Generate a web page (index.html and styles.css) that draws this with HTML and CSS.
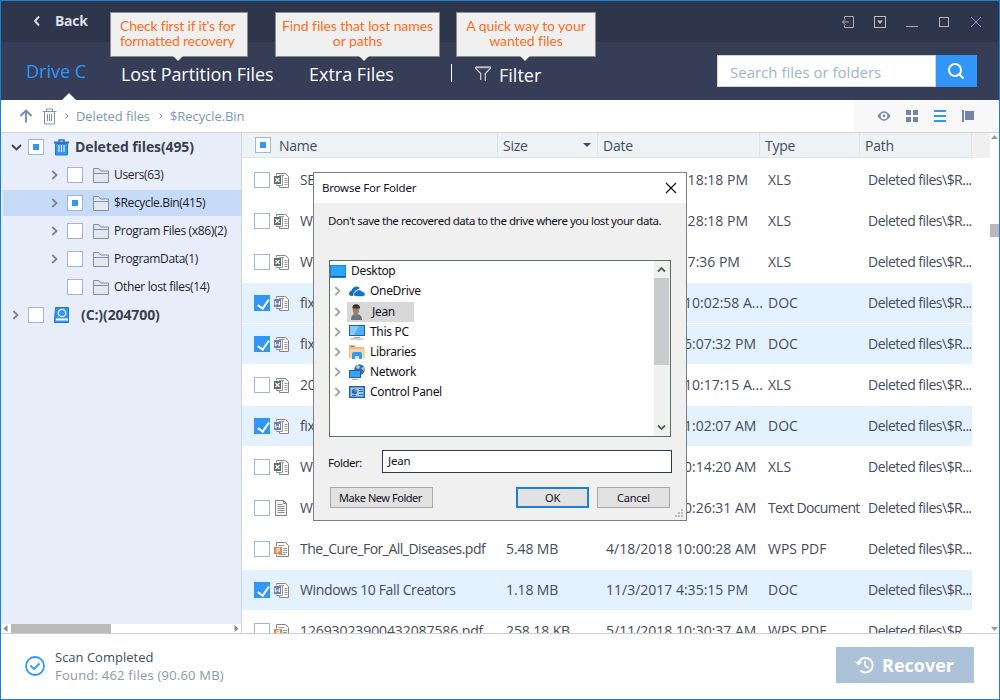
FILE: index.html
```html
<!DOCTYPE html>
<html lang="en">
<head>
    <meta charset="UTF-8">
    <title>Data Recovery</title>
    <link rel="stylesheet" href="styles.css">
</head>
<body>
    <!-- shared icons -->
    <svg width="0" height="0" class="sprite">
        <symbol id="i-folder" viewBox="0 0 16 15">
            <path d="M.5 14.500V.5H6l1.500 2.500h8v11.500z" fill="#e3e9ec" stroke="#7f8ea9"/>
            <path d="M.5 5.500h15" stroke="#7f8ea9"/>
        </symbol>
        <symbol id="i-page" viewBox="0 0 15 15">
            <path d="M2.500 2.500V.5h9l3 3v11h-9v-2h-3v-1" fill="#fff" stroke="#858585"/>
            <path d="M5 2.500h5M8.500 3v9.500H5M10.500 5.500h3M10.500 7.500h3M10.500 9.500h3M10.500 11.500h3" fill="none" stroke="#999"/>
        </symbol>
        <symbol id="i-xls" viewBox="0 0 15 15">
            <use href="#i-page"/>
            <rect x="0" y="3" width="7" height="8" fill="#5b6b5c"/>
            <path d="M1.500 5l4 4M5.500 5l-4 4" stroke="#fff" stroke-width="1.200"/>
        </symbol>
        <symbol id="i-doc" viewBox="0 0 15 15">
            <use href="#i-page"/>
            <rect x="0" y="3" width="7" height="8" fill="#6f81b0"/>
            <path d="M1.300 5v4L3.500 7l2 2V5" fill="none" stroke="#fff"/>
        </symbol>
        <symbol id="i-pdf" viewBox="0 0 15 15">
            <path d="M2.500 4.500v-4h9l3 3v11h-12v-2" fill="#fff" stroke="#858585"/>
            <path d="M4.500 3.500h6M9 6.500h4M9 8.500h4M9 10.500h4M5 12.500h7" stroke="#999"/>
            <rect x="0" y="5" width="8" height="7" fill="#dd8b4c"/>
            <path d="M3 11V6.500h2.500v2.200H3" fill="none" stroke="#fff"/>
        </symbol>
        <symbol id="i-txt" viewBox="0 0 15 16">
            <path d="M1.500.5h8l3 3v12h-11z" fill="#f4f4f4" stroke="#858585"/>
            <path d="M9.500.5v3h3" fill="none" stroke="#858585"/>
            <path d="M3.500 4.500h5M3.500 6.500h7M3.500 8.500h7M3.500 10.500h7M3.500 12.500h7" stroke="#8d8d8d"/>
        </symbol>
        <symbol id="i-chev" viewBox="0 0 7 10">
            <path d="M1.300 1l4.200 4-4.200 4" fill="none" stroke="currentColor" stroke-width="1.800"/>
        </symbol>
    </svg>

    <div class="window">
        <div class="titlebar">
            <svg class="back-icon" width="8" height="12" viewBox="0 0 8 12"><path d="M6 1.500L2 6l4 4.500" fill="none" stroke="#d5d8e0" stroke-width="2"/></svg>
            <span class="back">Back</span>
            <div class="win-buttons">
                <svg width="14" height="14" viewBox="0 0 14 14"><path d="M3.500 3.500v-2h9v11h-9v-2M1.500 7H8M4.500 4L1.500 7l3 3" fill="none" stroke="#b0adb4"/></svg>
                <svg width="14" height="14" viewBox="0 0 14 14"><rect x="1.500" y="1.500" width="11" height="11" fill="none" stroke="#c0bcc0"/><path d="M4 5.500h6L7 9z" fill="#c0bcc0"/></svg>
                <svg width="14" height="14" viewBox="0 0 14 14"><path d="M1 11.500h12" stroke="#aeabb4"/></svg>
                <svg width="14" height="14" viewBox="0 0 14 14"><rect x="2.500" y="2.500" width="9" height="9" fill="none" stroke="#b9b1b8"/></svg>
                <svg width="14" height="14" viewBox="0 0 14 14"><path d="M2 2l10 10M12 2L2 12" stroke="#7f92c0"/></svg>
            </div>
        </div>

        <div class="tabs">
            <div class="tab drive active">Drive C</div>
            <div class="tab lost">Lost Partition Files
                <div class="tip tip-lost">Check first if it's for<br>formatted recovery</div>
            </div>
            <div class="tab extra">Extra Files
                <div class="tip tip-extra">Find files that lost names<br>or paths</div>
            </div>
            <div class="divider"></div>
            <div class="tab filter">
                <svg width="16" height="16" viewBox="0 0 16 16"><path d="M.7 1h14.600v1.500l-5 5V15M.7 1v1.500l5 5V14" fill="none" stroke="#d9d2d8" stroke-width="1.200"/><path d="M1 1.500h14" stroke="#c7bcc4" stroke-width="1.500"/></svg>
                <span>Filter</span>
                <div class="tip tip-filter">A quick way to your<br>wanted files</div>
            </div>
            <div class="search">
                <div class="search-input">Search files or folders</div>
                <div class="search-btn">
                    <svg width="18" height="18" viewBox="0 0 18 18"><circle cx="8" cy="8" r="6" fill="none" stroke="#fff" stroke-width="2"/><path d="M12.300 12.300L16.500 16.500" stroke="#fff" stroke-width="2"/></svg>
                </div>
            </div>
        </div>

        <div class="crumbs">
            <svg width="14" height="14" viewBox="0 0 14 14"><path d="M7 13.500V2M1.500 7L7 1.500 12.500 7" fill="none" stroke="#7487ac" stroke-width="1.800"/></svg>
            <svg class="crumb-trash" width="15" height="17" viewBox="0 0 15 17"><path d="M.5 3.500h14M4.500 3V1h6v2M2.500 4v12h10V4M5.500 6v7M7.500 6v7M9.500 6v7" fill="none" stroke="#8193b3"/></svg>
            <svg class="sep" width="4" height="6" viewBox="0 0 4 6"><path d="M.7.5L3 3 .7 5.500" fill="none" stroke="#7487ac"/></svg>
            <span class="crumb crumb-one">Deleted files</span>
            <svg class="sep sep-two" width="4" height="6" viewBox="0 0 4 6"><path d="M.7.5L3 3 .7 5.500" fill="none" stroke="#7487ac"/></svg>
            <span class="crumb">$Recycle.Bin</span>
            <div class="views">
                <svg width="14" height="12" viewBox="0 0 14 12"><path d="M0.500 6Q7-3.500 13.500 6 7 15.500.5 6z" fill="#7384a8"/><circle cx="7" cy="6" r="3.300" fill="#fff"/><circle cx="7" cy="6" r="1.400" fill="#7384a8"/></svg>
                <svg width="12" height="12" viewBox="0 0 12 12"><path d="M0 0h5v5H0zM7 0h5v5H7zM0 7h5v5H0zM7 7h5v5H7z" fill="#7384a8"/></svg>
                <svg width="12" height="12" viewBox="0 0 12 12"><path d="M0 1h12M0 6h12M0 11h12" stroke="#3296f8" stroke-width="2"/></svg>
                <svg width="12" height="12" viewBox="0 0 12 12"><path d="M0 0h2v12H0zM3 1h9v9H3z" fill="#7384a8"/></svg>
            </div>
        </div>

        <div class="main">
            <div class="sidebar">
                <div class="node root">
                    <svg class="arrow-down" width="11" height="7" viewBox="0 0 11 7"><path d="M1 1l4.500 4.500L10 1" fill="none" stroke="#3a4050" stroke-width="1.800"/></svg>
                    <span class="box partial"></span>
                    <svg class="root-icon" width="15" height="17" viewBox="0 0 15 17"><path d="M5 3V1h5v2" fill="none" stroke="#2c74c8" stroke-width="1.500"/><path d="M0 2.500h15v2H0z" fill="#2c74c8"/><path d="M1.500 4.500h12v11.500h-12z" fill="#3296f8" stroke="#2c74c8"/><path d="M5 6v7M7.500 6v7M10 6v7" stroke="#fff"/></svg>
                    <span class="root-label">Deleted files(495)</span>
                </div>
                <div class="node child">
                    <svg class="arrow" width="7" height="10"><use href="#i-chev"/></svg>
                    <span class="box"></span>
                    <svg class="folder" width="16" height="15"><use href="#i-folder"/></svg>
                    <span class="label">Users(63)</span>
                </div>
                <div class="node child selected">
                    <svg class="arrow" width="7" height="10"><use href="#i-chev"/></svg>
                    <span class="box partial"></span>
                    <svg class="folder" width="16" height="15"><use href="#i-folder"/></svg>
                    <span class="label">$Recycle.Bin(415)</span>
                </div>
                <div class="node child">
                    <svg class="arrow" width="7" height="10"><use href="#i-chev"/></svg>
                    <span class="box"></span>
                    <svg class="folder" width="16" height="15"><use href="#i-folder"/></svg>
                    <span class="label">Program Files (x86)(2)</span>
                </div>
                <div class="node child">
                    <svg class="arrow" width="7" height="10"><use href="#i-chev"/></svg>
                    <span class="box"></span>
                    <svg class="folder" width="16" height="15"><use href="#i-folder"/></svg>
                    <span class="label">ProgramData(1)</span>
                </div>
                <div class="node child no-arrow">
                    <span class="box"></span>
                    <svg class="folder" width="16" height="15"><use href="#i-folder"/></svg>
                    <span class="label">Other lost files(14)</span>
                </div>
                <div class="node root">
                    <svg class="arrow-right" width="7" height="10"><use href="#i-chev"/></svg>
                    <span class="box"></span>
                    <svg class="root-icon" width="16" height="16" viewBox="0 0 16 16"><path d="M1.500.5h13v15h-14v-3z" fill="#3296f8" stroke="#2c74c8"/><circle cx="8" cy="6" r="3.700" fill="none" stroke="#fff" stroke-width="1.200"/><path d="M2 12.500h12" stroke="#fff" stroke-width="2"/></svg>
                    <span class="root-label drive-label">(C:)(204700)</span>
                </div>
                <div class="hscroll">
                    <svg width="5" height="7" viewBox="0 0 5 7"><path d="M4.500 0v7L.5 3.500z" fill="#8a8a8a"/></svg>
                    <span class="hthumb"></span>
                    <svg class="hright" width="5" height="7" viewBox="0 0 5 7"><path d="M.5 0v7l4-3.500z" fill="#8a8a8a"/></svg>
                </div>
            </div>

            <div class="list">
                <div class="thead">
                    <div class="th th-name"><span class="box partial"></span>Name</div>
                    <div class="th">Size<svg class="sort" width="8" height="4" viewBox="0 0 8 4"><path d="M0 0h8L4 4z" fill="#3c4866"/></svg></div>
                    <div class="th">Date</div>
                    <div class="th">Type</div>
                    <div class="th">Path</div>
                </div>
                <div class="rows">
                    <div class="row">
                        <span class="box"></span><svg class="ficon" width="15" height="15"><use href="#i-xls"/></svg>
                        <span class="name">SEO</span><span class="size"></span><span class="date">11/3/2017 4:18:18 PM</span><span class="type">XLS</span><span class="path">Deleted files\$R...</span>
                    </div>
                    <div class="row">
                        <span class="box"></span><svg class="ficon" width="15" height="15"><use href="#i-xls"/></svg>
                        <span class="name">W</span><span class="size"></span><span class="date">11/3/2017 4:28:18 PM</span><span class="type">XLS</span><span class="path">Deleted files\$R...</span>
                    </div>
                    <div class="row">
                        <span class="box"></span><svg class="ficon" width="15" height="15"><use href="#i-xls"/></svg>
                        <span class="name">W</span><span class="size"></span><span class="date">4/3/2018 4:37:36 PM</span><span class="type">XLS</span><span class="path">Deleted files\$R...</span>
                    </div>
                    <div class="row checked">
                        <span class="box on"></span><svg class="ficon" width="15" height="15"><use href="#i-doc"/></svg>
                        <span class="name">fix</span><span class="size"></span><span class="date">11/13/2017 10:02:58 A...</span><span class="type">DOC</span><span class="path">Deleted files\$R...</span>
                    </div>
                    <div class="row checked">
                        <span class="box on"></span><svg class="ficon" width="15" height="15"><use href="#i-doc"/></svg>
                        <span class="name">fix</span><span class="size"></span><span class="date">11/13/2017 6:07:32 PM</span><span class="type">DOC</span><span class="path">Deleted files\$R...</span>
                    </div>
                    <div class="row">
                        <span class="box"></span><svg class="ficon" width="15" height="15"><use href="#i-xls"/></svg>
                        <span class="name">20</span><span class="size"></span><span class="date">11/13/2017 10:17:15 A...</span><span class="type">XLS</span><span class="path">Deleted files\$R...</span>
                    </div>
                    <div class="row checked">
                        <span class="box on"></span><svg class="ficon" width="15" height="15"><use href="#i-doc"/></svg>
                        <span class="name">fix</span><span class="size"></span><span class="date">11/3/2017 11:02:07 AM</span><span class="type">DOC</span><span class="path">Deleted files\$R...</span>
                    </div>
                    <div class="row">
                        <span class="box"></span><svg class="ficon" width="15" height="15"><use href="#i-xls"/></svg>
                        <span class="name">W</span><span class="size"></span><span class="date">4/18/2018 10:14:20 AM</span><span class="type">XLS</span><span class="path">Deleted files\$R...</span>
                    </div>
                    <div class="row">
                        <span class="box"></span><svg class="ficon" width="15" height="16"><use href="#i-txt"/></svg>
                        <span class="name">W</span><span class="size"></span><span class="date">4/18/2018 10:26:31 AM</span><span class="type long">Text Document</span><span class="path">Deleted files\$R...</span>
                    </div>
                    <div class="row">
                        <span class="box"></span><svg class="ficon" width="15" height="15"><use href="#i-pdf"/></svg>
                        <span class="name tight">The_Cure_For_All_Diseases.pdf</span><span class="size">5.48 MB</span><span class="date">4/18/2018 10:00:28 AM</span><span class="type">WPS PDF</span><span class="path">Deleted files\$R...</span>
                    </div>
                    <div class="row checked">
                        <span class="box on"></span><svg class="ficon" width="15" height="15"><use href="#i-doc"/></svg>
                        <span class="name">Windows 10 Fall Creators</span><span class="size">1.18 MB</span><span class="date">11/3/2017 4:35:15 PM</span><span class="type">DOC</span><span class="path">Deleted files\$R...</span>
                    </div>
                    <div class="row">
                        <span class="box"></span><svg class="ficon" width="15" height="15"><use href="#i-pdf"/></svg>
                        <span class="name digits">12693023900432087586.pdf</span><span class="size">258.18 KB</span><span class="date">5/11/2018 10:30:37 AM</span><span class="type">WPS PDF</span><span class="path">Deleted files\$R...</span>
                    </div>
                </div>
            </div>
            <div class="vscroll">
                <svg width="7" height="4" viewBox="0 0 7 4"><path d="M0 4h7L3.500 0z" fill="#9a9a9a"/></svg>
                <span class="vthumb"></span>
                <svg class="vdown" width="7" height="4" viewBox="0 0 7 4"><path d="M0 0h7L3.500 4z" fill="#9a9a9a"/></svg>
            </div>
        </div>

        <div class="footer">
            <svg class="done" width="20" height="20" viewBox="0 0 20 20"><circle cx="10" cy="10" r="9" fill="none" stroke="#3296f8" stroke-width="1.800"/><path d="M5.500 9.500l3.500 3.500 5.500-5.500" fill="none" stroke="#3296f8" stroke-width="1.800"/></svg>
            <div class="status">
                <div class="scan">Scan Completed</div>
                <div class="found">Found: 462 files (90.60 MB)</div>
            </div>
            <div class="recover">
                <svg width="20" height="18" viewBox="0 0 20 18"><path d="M3.200 8.500a7.300 7.300 0 1 1 2.300 6" fill="none" stroke="#fff" stroke-width="2"/><path d="M0 5.500l3.500 4L7.500 6z" fill="#fff"/><path d="M10 4.500v5l3.500 2.500" fill="none" stroke="#fff" stroke-width="1.600"/></svg>
                <span>Recover</span>
            </div>
        </div>

        <div class="dialog">
            <div class="dialog-title">
                <span>Browse For Folder</span>
                <svg width="12" height="12" viewBox="0 0 12 12"><path d="M1 1l10 10M11 1L1 11" stroke="#111" stroke-width="1.200"/></svg>
            </div>
            <div class="dialog-body">
                <div class="message">Don't save the recovered data to the drive where you lost your data.</div>
                <div class="tree">
                    <div class="items">
                        <div class="item top">
                            <svg width="16" height="13" viewBox="0 0 16 13"><rect x=".5" y=".5" width="15" height="12" fill="#2aa6fb" stroke="#1b84d6"/><path d="M1 11.500h14" stroke="#0c4fae"/></svg>
                            <span>Desktop</span>
                        </div>
                        <div class="item">
                            <svg class="chev" width="7" height="10"><use href="#i-chev"/></svg>
                            <svg width="16" height="12" viewBox="0 0 16 12"><path d="M0 8.500A3 3 0 0 1 2.500 5.500 5 5 0 0 1 11 3L6 6l-2 5H2.500A2.500 2.500 0 0 1 0 8.500z" fill="#1272c9"/><path d="M4.500 9.500a2.500 2.500 0 0 1 2-2.500 3.600 3.600 0 0 1 6.500-.5 2.700 2.700 0 0 1 3 2.700 2 2 0 0 1-2 2.300H7a2.200 2.200 0 0 1-2.500-2z" fill="#1272c9" stroke="#fff" stroke-width=".6"/></svg>
                            <span>OneDrive</span>
                        </div>
                        <div class="item current">
                            <svg class="chev" width="7" height="10"><use href="#i-chev"/></svg>
                            <div class="pick">
                                <svg width="14" height="16" viewBox="0 0 14 16"><path d="M1 16c0-5 2-6 5-6s6 1 6 6z" fill="#6f7576"/><path d="M3 9.500l3 4 2-4z" fill="#4f8fc0"/><ellipse cx="6" cy="5.500" rx="3.200" ry="4.500" fill="#a8795a"/><path d="M2.500 4.500Q2 .3 6 .3t4 4.200z" fill="#3b3330"/></svg>
                                <span>Jean</span>
                            </div>
                        </div>
                        <div class="item">
                            <svg class="chev" width="7" height="10"><use href="#i-chev"/></svg>
                            <svg width="16" height="15" viewBox="0 0 16 15"><rect x=".5" y=".5" width="15" height="10" fill="#4fb0f8" stroke="#1f5fae"/><path d="M1 1h9L5 10H1z" fill="#8bcbfb"/><path d="M1.500 14h13M5 12.500h6" stroke="#9aa3a8"/></svg>
                            <span>This PC</span>
                        </div>
                        <div class="item">
                            <svg class="chev" width="7" height="10"><use href="#i-chev"/></svg>
                            <svg width="16" height="14" viewBox="0 0 16 14"><path d="M0 0h6l1 2h8v11H0z" fill="#f2b877"/><path d="M1 4h15v9H1z" fill="#f9d3a0"/><path d="M3 14V9q0-2 2-2h6q2 0 2 2v5h-3v-3H6v3z" fill="#2a9df4"/><path d="M2 1.500h3" stroke="#3e86c8"/></svg>
                            <span>Libraries</span>
                        </div>
                        <div class="item">
                            <svg class="chev" width="7" height="10"><use href="#i-chev"/></svg>
                            <svg width="16" height="16" viewBox="0 0 16 16"><circle cx="10.500" cy="5.500" r="5.300" fill="#3d6fa6"/><path d="M8 1l3 1-1 3-3-1zM12 4l3-1v4z" fill="#a9cbe8"/><rect x=".5" y="6.500" width="11" height="7" fill="#35a3f6" stroke="#1f5fae"/><path d="M3 15.500h6" stroke="#9aa3a8"/></svg>
                            <span>Network</span>
                        </div>
                        <div class="item">
                            <svg class="chev" width="7" height="10"><use href="#i-chev"/></svg>
                            <svg width="16" height="12" viewBox="0 0 16 12"><rect x=".7" y=".7" width="14.600" height="10.600" fill="#8fd0fb" stroke="#2a59a8" stroke-width="1.400"/><circle cx="5.500" cy="5.500" r="2.700" fill="#1c70c4"/><path d="M5.500 5.500V2.500a3 3 0 0 1 3 3z" fill="#f07c3c"/><path d="M10 3.500h4M10 5.500h4M3 9.500h4M10 8.500h4" stroke="#2a6dbb"/></svg>
                            <span>Control Panel</span>
                        </div>
                    </div>
                    <div class="tree-scroll">
                        <svg width="15" height="17" viewBox="0 0 15 17"><path d="M4 10.500L7.500 7l3.500 3.500" fill="none" stroke="#566356" stroke-width="1.800"/></svg>
                        <span class="tree-thumb"></span>
                        <svg class="tree-down" width="15" height="17" viewBox="0 0 15 17"><path d="M4 6.500l3.500 3.500L11 6.500" fill="none" stroke="#566356" stroke-width="1.800"/></svg>
                    </div>
                </div>
                <div class="folder-line">
                    <span class="folder-label">Folder:</span>
                    <div class="folder-input">Jean</div>
                </div>
                <div class="buttons">
                    <div class="btn make">Make New Folder</div>
                    <div class="btn ok">OK</div>
                    <div class="btn">Cancel</div>
                </div>
            </div>
            <svg class="grip" width="9" height="9" viewBox="0 0 9 9"><path d="M6 0h2v2H6zM3 3h2v2H3zM6 3h2v2H6zM0 6h2v2H0zM3 6h2v2H3zM6 6h2v2H6z" fill="#bdbdbd"/></svg>
        </div>
    </div>
</body>
</html>
```

FILE: styles.css
```css
* {
    box-sizing: border-box;
}

body {
    margin: 0;
    font-family: "Open Sans", "Noto Sans", sans-serif;
    font-size: 14px;
    color: #454c5c;
}

svg {
    display: block;
    flex: none;
}

.sprite {
    position: absolute;
}

.window {
    position: relative;
    display: flex;
    flex-direction: column;
    width: 1000px;
    height: 700px;
    border: 1px solid #1b80d4;
    background: #fff;
    overflow: hidden;
    white-space: nowrap;
}

/* title bar */
.titlebar {
    display: flex;
    align-items: center;
    height: 41px;
    padding: 0 16px 0 32px;
    background: #2d364b;
}

.back-icon {
    margin-top: -1px;
}

.back {
    margin: -2px 0 0 14px;
    color: #dcdfe6;
    font-weight: 700;
    font-size: 14px;
    letter-spacing: -0.3px;
}

.win-buttons {
    display: flex;
    gap: 18px;
    margin-left: auto;
}

/* tabs */
.tabs {
    display: flex;
    height: 58px;
    background: #353d57;
    color: #fff;
    font-size: 18px;
    line-height: 24px;
}

.tab {
    position: relative;
    padding-top: 20px;
}

.drive {
    width: 95px;
    padding-top: 17px;
    padding-left: 25px;
    color: #3296f8;
}

.drive::after {
    content: "";
    position: absolute;
    left: 61px;
    bottom: 0;
    border: 7px solid transparent;
    border-top: 0;
    border-bottom-color: #fff;
}

.lost {
    width: 188px;
    padding-left: 25px;
    letter-spacing: -0.05px;
}

.extra {
    width: 167px;
    padding-left: 25px;
}

.divider {
    width: 1px;
    height: 18px;
    margin-top: 22px;
    background: #fff;
}

.filter {
    display: flex;
    gap: 8px;
    padding-top: 21px;
    padding-left: 23px;
}

.filter svg {
    margin-top: 3px;
}

.tip {
    position: absolute;
    top: -30px;
    height: 45px;
    padding-top: 5px;
    border: 1px solid #8d8f8c;
    background: #f0f0f0;
    color: #fb6f1e;
    font-family: Lato, sans-serif;
    font-size: 14px;
    line-height: 15px;
    letter-spacing: -0.08px;
    text-align: center;
}

.tip::after {
    content: "";
    position: absolute;
    left: 62px;
    top: 43px;
    border: 5px solid transparent;
    border-bottom: 0;
    border-top-color: #f0f0f0;
}

.tip-lost {
    left: 14px;
    width: 138px;
    padding-left: 9px;
    letter-spacing: -0.2px;
    text-align: left;
}

.tip-extra {
    left: -9px;
    width: 165px;
}

.tip-extra::after {
    left: 83px;
}

.tip-filter {
    left: 4px;
    width: 140px;
}

.tip-filter::after {
    left: 63px;
}

.search {
    display: flex;
    width: 260px;
    height: 32px;
    margin: 13px 22px 0 auto;
}

.search-input {
    flex: 1;
    padding: 4px 12px;
    border: 1px solid #d4d4d8;
    background: #fff;
    color: #a0b6cc;
    font-size: 15px;
}

.search-btn {
    display: flex;
    align-items: center;
    justify-content: center;
    width: 41px;
    padding-right: 2px;
    background: #3296f8;
}

/* breadcrumb */
.crumbs {
    display: flex;
    align-items: center;
    height: 33px;
    padding-left: 18px;
    border-bottom: 1px solid #d0d3d8;
    color: #7b99b8;
}

.crumb-trash {
    margin: 0 8px 0 9px;
}

.crumb {
    font-size: 13px;
    letter-spacing: -0.08px;
}

.crumb-one {
    margin-left: 7px;
}

.sep-two {
    margin: 0 7px 0 9px;
}

.views {
    display: flex;
    align-items: center;
    gap: 16px;
    align-self: stretch;
    width: 145px;
    margin-left: auto;
    padding-left: 23px;
    background: #f8f8f9;
}

.views svg:first-child {
    margin-right: -1px;
}

/* content */
.main {
    display: flex;
    height: 500px;
}

.sidebar {
    display: flex;
    flex-direction: column;
    width: 241px;
    border-right: 1px solid #cdd4dd;
    background: #e8eef9;
}

.node {
    display: flex;
    align-items: center;
    height: 28px;
    color: #7c8496;
}

.box {
    flex: none;
    position: relative;
    width: 16px;
    height: 16px;
    border: 1px solid #a3b5d0;
    background: #fff;
}

.partial::after {
    content: "";
    position: absolute;
    left: 4px;
    top: 4px;
    width: 6px;
    height: 6px;
    background: #3296f8;
}

.on {
    border-color: #3296f8;
    background: #3296f8;
}

.on::after {
    content: "";
    position: absolute;
    left: 4.5px;
    top: 1px;
    width: 5px;
    height: 10px;
    border: solid #fff;
    border-width: 0 2px 2px 0;
    transform: rotate(35deg);
}

.arrow-down {
    margin: 0 6px 0 10px;
}

.arrow-right {
    margin: 0 9px 0 11px;
}

.root-icon {
    margin-left: 10px;
}

.root-label {
    margin: -1px 0 0 6px;
    color: #3a4050;
    font-weight: 700;
    font-size: 14px;
    letter-spacing: -0.1px;
}

.drive-label {
    margin-left: 11px;
}

.arrow {
    margin: 0 9px 0 50px;
}

.no-arrow {
    padding-left: 66px;
}

.folder {
    margin: 1px 5px 0 10px;
}

.label {
    margin-top: -2px;
    color: #1f1a2b;
    font-size: 12px;
    letter-spacing: -0.35px;
}

.selected {
    height: 26px;
    margin: 1px 0 1px 2px;
    background: #c5dbf7;
}

.selected .arrow {
    margin-left: 48px;
}

.hscroll {
    display: flex;
    align-items: center;
    height: 9px;
    margin-top: auto;
    padding: 0 2px;
    background: #fff;
}

.hthumb {
    width: 100px;
    height: 9px;
    margin-left: 3px;
    background: #bababa;
}

.hright {
    margin-left: auto;
}

/* file list */
.list {
    width: 748px;
    overflow: hidden;
}

.thead {
    display: grid;
    grid-template-columns: 256px 100px 162px 100px 112px;
    height: 25px;
    background: #f0f0f0;
}

.th {
    display: flex;
    align-items: center;
    padding-left: 5px;
    border-right: 1px solid #dfe5e9;
    border-bottom: 1px solid #dfe5e9;
    background: #edf2f5;
    letter-spacing: -0.25px;
}

.th-name {
    gap: 8px;
    padding-left: 13px;
}

.sort {
    margin: 0 6px 0 auto;
}

.rows {
    display: grid;
    grid-auto-rows: 40px;
    row-gap: 1px;
    padding-top: 2px;
}

.row {
    display: grid;
    grid-template-columns: 20px 26px 206px 100px 162px 100px 104px;
    align-items: center;
    width: 730px;
    padding-left: 12px;
}

.name,
.size,
.date,
.type,
.path {
    padding-bottom: 2px;
}

.size {
    letter-spacing: -0.1px;
}

.name {
    letter-spacing: -0.37px;
}

.tight {
    letter-spacing: -0.5px;
}

/* the text of this name is mostly figures */
.digits {
    letter-spacing: -0.1px;
}

.long {
    letter-spacing: -0.62px;
}

.path {
    letter-spacing: -0.52px;
}

.checked {
    background: #e4f1fe;
}

/* dialog */
.dialog {
    position: absolute;
    left: 312px;
    top: 171px;
    width: 374px;
    height: 349px;
    border: 1px solid #7d7d7d;
    background: #f0f0f0;
    color: #14101c;
    font-family: "Noto Sans", sans-serif;
    font-size: 11.5px;
    line-height: 16px;
    letter-spacing: -0.2px;
}

.dialog-title {
    display: flex;
    align-items: center;
    justify-content: space-between;
    height: 30px;
    padding: 0 9px 0 8px;
    background: #fff;
}

.dialog-body {
    padding: 10px 14px 0;
}

.message {
    letter-spacing: -0.48px;
}

.tree {
    display: flex;
    justify-content: space-between;
    width: 342px;
    height: 177px;
    margin: 31px 0 0 1px;
    border: 1px solid #5f6d5f;
    background: #fff;
}

.item {
    display: flex;
    align-items: center;
    gap: 5px;
    height: 20px;
    padding-left: 4px;
    font-size: 12px;
    letter-spacing: -0.32px;
}

.top {
    padding-left: 0;
}

.chev {
    margin-right: 3px;
    color: #a3a3a3;
}

.current {
    margin-top: 1px;
}

.pick {
    display: flex;
    align-items: center;
    gap: 8px;
    width: 67px;
    height: 20px;
    margin-left: -2px;
    padding-left: 3px;
    background: #d8d8d8;
}

.tree-scroll {
    display: flex;
    flex-direction: column;
    width: 16px;
    background: #f0f0f0;
}

.tree-thumb {
    width: 15px;
    height: 87px;
    background: #c9cccd;
}

.tree-down {
    margin-top: auto;
}

.folder-line {
    display: flex;
    align-items: center;
    margin-top: 13px;
}

.folder-label {
    width: 54px;
    padding-top: 2px;
    letter-spacing: -0.5px;
}

.folder-input {
    width: 290px;
    height: 23px;
    padding: 2px 5px;
    border: 1px solid #33394a;
    background: #fff;
}

.buttons {
    display: flex;
    margin-top: 14px;
    padding-left: 2px;
}

.btn {
    width: 73px;
    height: 21px;
    border: 1px solid #a9a9ad;
    background: #e2e2e2;
    font-size: 11px;
    line-height: 19px;
    text-align: center;
}

.make {
    width: 103px;
    padding-right: 2px;
    letter-spacing: -0.45px;
}

.ok {
    margin: 0 8px 0 83px;
    border: 2px solid #1c80d4;
    line-height: 17px;
}

.grip {
    position: absolute;
    right: 2px;
    bottom: 2px;
}

.vscroll {
    display: flex;
    flex-direction: column;
    align-items: center;
    width: 9px;
    padding: 2px 0;
}

.vthumb {
    width: 9px;
    height: 13px;
    margin-top: 85px;
    background: #b9b9b9;
}

.vdown {
    margin-top: auto;
}

/* footer */
.footer {
    display: flex;
    align-items: center;
    height: 66px;
    padding: 0 25px 3px 24px;
    border-top: 1px solid #cfcfcf;
}

.done {
    margin-top: 2px;
}

.status {
    margin: 2px 0 0 10px;
    font-size: 13px;
    line-height: 18px;
}

.found {
    color: #8c9aab;
    letter-spacing: 0.22px;
}

.recover {
    display: flex;
    align-items: center;
    gap: 7px;
    width: 138px;
    height: 36px;
    margin-left: auto;
    padding-left: 19px;
    background: #abc2d9;
    color: #fff;
    font-weight: 700;
    font-size: 18px;
}
```
